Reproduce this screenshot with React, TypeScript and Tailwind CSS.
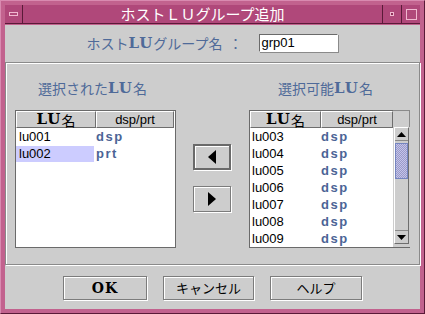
import React from 'react';

const jp = { fontFamily: '"Noto Sans CJK JP", "DejaVu Sans", sans-serif' };
const latin = { fontFamily: '"Liberation Sans", "DejaVu Sans", sans-serif' };
const serif = { fontFamily: '"DejaVu Serif", "Liberation Serif", serif' };

const available = ['lu003', 'lu004', 'lu005', 'lu006', 'lu007', 'lu008', 'lu009'];

function HeaderCell({ children, className = '' }: { children: React.ReactNode; className?: string }) {
  return (
    <div
      className={`h-[17px] flex items-center justify-center bg-[#cdcdcd] border-t border-l border-t-white border-l-white border-r border-b border-r-[#6e6e6e] border-b-[#6e6e6e] ${className}`}
    >
      {children}
    </div>
  );
}

function LuHead() {
  return (
    <span className="flex items-center text-[15px] leading-none text-black">
      <span style={serif} className="font-bold tracking-[1px]">LU</span>
      <span style={jp} className="text-[14px]">名</span>
    </span>
  );
}

function Row({ name, kind, selected }: { name: string; kind: string; selected?: boolean }) {
  return (
    <div className="flex h-[17px] items-center">
      <div
        style={latin}
        className={`w-[78px] h-[16px] flex items-center pl-[3px] text-[13px] text-black ${selected ? 'bg-[#ccccff]' : ''}`}
      >
        {name}
      </div>
      <div style={latin} className="pl-[2px] text-[13px] font-bold tracking-[1.5px] text-[#4b6496]">
        {kind}
      </div>
    </div>
  );
}

function Btn({ children, w, focus }: { children: React.ReactNode; w: string; focus?: boolean }) {
  return (
    <div
      className={`${w} flex items-center justify-center bg-[#cdcdcd] ${
        focus ? 'border-2 border-[#6a6a6a]' : 'border border-[#7c7c7c]'
      } shadow-[1px_1px_0_#ffffff,inset_1px_1px_0_#ffffff]`}
    >
      {children}
    </div>
  );
}

export default function App() {
  return (
    <div className="w-[425px] h-[314px] bg-[#c2628e] flex flex-col px-[4px] pt-[4px] pb-[4px] border border-[#5a1a38] border-t-[#d98ab0] border-l-[#d98ab0] overflow-hidden">
      {/* Title bar */}
      <div className="h-[19px] flex bg-[#b0487a] border-b border-[#5a1a38]">
        <div className="w-[18px] flex items-center justify-center border-r border-[#5a1a38]">
          <div className="w-[9px] h-[4px] border border-[#f0b8d0] bg-[#b0487a]" />
        </div>
        <div style={jp} className="flex-1 text-center text-white text-[15px] leading-[18px]">
          ホストＬＵグループ追加
        </div>
        <div className="w-[19px] flex items-center justify-center border-l border-[#5a1a38]">
          <div className="w-[4px] h-[4px] border border-[#f0b8d0] bg-[#8c2f58]" />
        </div>
        <div className="w-[19px] flex items-center justify-center border-l border-[#5a1a38]">
          <div className="w-[11px] h-[11px] border border-[#f0b8d0]" />
        </div>
      </div>

      {/* Content */}
      <div className="flex-1 mt-[1px] bg-[#cdcdcd] flex flex-col">
        <div className="mt-[9px] flex items-center justify-center gap-[17px]">
          <div style={jp} className="flex items-center text-[14px] text-[#4f6a99] leading-none">
            <span>ホスト</span>
            <span style={serif} className="font-bold text-[15px] tracking-[1px]">LU</span>
            <span>グループ名</span>
            <span className="ml-[6px]">：</span>
          </div>
          <div
            style={latin}
            className="w-[79px] h-[18px] bg-white border border-[#6a6a6a] border-r-white border-b-white shadow-[1px_1px_0_#8a8a8a] text-[13px] leading-[16px] pl-[1px] text-black"
          >
            grp01
          </div>
        </div>

        {/* Panel */}
        <div className="mt-[10px] h-[203px] border border-[#8a8a8a] shadow-[inset_1px_1px_0_#ffffff,1px_1px_0_#ffffff] flex pl-[9px] pt-[17px]">
          {/* Left list */}
          <div className="w-[161px] flex flex-col">
            <div style={jp} className="h-[16px] flex items-center justify-center text-[14px] text-[#4f6a99] leading-none pr-[6px]">
              <span>選択された</span>
              <span style={serif} className="font-bold text-[15px] tracking-[1px]">LU</span>
              <span>名</span>
            </div>
            <div className="mt-[14px] h-[138px] border border-[#6a6a6a] bg-white flex flex-col">
              <div className="flex">
                <HeaderCell className="w-[80px]">
                  <LuHead />
                </HeaderCell>
                <HeaderCell className="w-[78px]">
                  <span style={latin} className="text-[13px] text-black">dsp/prt</span>
                </HeaderCell>
              </div>
              <Row name="lu001" kind="dsp" />
              <Row name="lu002" kind="prt" selected />
            </div>
          </div>

          {/* Move buttons */}
          <div className="ml-[17px] w-[38px] flex flex-col pt-[64px] gap-[16px]">
            <Btn w="h-[26px]" focus>
              <svg width="10" height="14" viewBox="0 0 10 14">
                <polygon points="9,0 9,14 1,7" fill="#000" />
              </svg>
            </Btn>
            <Btn w="h-[26px]">
              <svg width="10" height="14" viewBox="0 0 10 14">
                <polygon points="1,0 1,14 9,7" fill="#000" />
              </svg>
            </Btn>
          </div>

          {/* Right list */}
          <div className="ml-[18px] w-[161px] flex flex-col">
            <div style={jp} className="h-[16px] flex items-center justify-center text-[14px] text-[#4f6a99] leading-none pr-[8px]">
              <span>選択可能</span>
              <span style={serif} className="font-bold text-[15px] tracking-[1px]">LU</span>
              <span>名</span>
            </div>
            <div className="mt-[14px] h-[138px] border border-[#6a6a6a] border-t-0 border-r-0 flex">
              <div className="w-[143px] flex flex-col bg-white border-t border-[#6a6a6a]">
                <div className="flex">
                  <HeaderCell className="w-[71px]">
                    <LuHead />
                  </HeaderCell>
                  <HeaderCell className="w-[72px]">
                    <span style={latin} className="text-[13px] text-black">dsp/prt</span>
                  </HeaderCell>
                </div>
                <div className="flex flex-col">
                  {available.map((n) => (
                    <div key={n} className="flex h-[17px] items-center">
                      <div style={latin} className="w-[71px] pl-[2px] text-[13px] text-black">{n}</div>
                      <div style={latin} className="text-[13px] font-bold tracking-[1.5px] text-[#4b6496]">dsp</div>
                    </div>
                  ))}
                </div>
              </div>
              {/* Scrollbar column */}
              <div className="w-[17px] flex flex-col bg-[#cdcdcd]">
                <div className="h-[17px] border-t border-r border-[#8a8a8a]" />
                <div className="flex-1 mx-[1px] mb-[3px] border border-[#6e6e6e] border-t-white border-l-white bg-[#cdcdcd] flex flex-col">
                  <div className="h-[13px] flex items-center justify-center border-b border-[#8a8a8a]">
                    <svg width="9" height="5" viewBox="0 0 9 5">
                      <polygon points="0,5 9,5 4.5,0" fill="#000" />
                    </svg>
                  </div>
                  <div className="mt-[2px] h-[36px] border border-[#7585c0] bg-[repeating-conic-gradient(#9a9ac8_0_25%,#c4c4ea_0_50%)] bg-[length:2px_2px]" />
                  <div className="flex-1" />
                  <div className="h-[13px] flex items-center justify-center border-t border-[#8a8a8a]">
                    <svg width="9" height="5" viewBox="0 0 9 5">
                      <polygon points="0,0 9,0 4.5,5" fill="#000" />
                    </svg>
                  </div>
                </div>
              </div>
            </div>
          </div>
        </div>

        {/* Bottom buttons */}
        <div className="mt-[11px] flex justify-center gap-[16px]">
          <Btn w="w-[84px] h-[24px]">
            <span style={serif} className="text-[14px] font-semibold tracking-[1px] text-black">OK</span>
          </Btn>
          <Btn w="w-[91px] h-[24px]">
            <span style={jp} className="text-[13px] text-black">キャンセル</span>
          </Btn>
          <Btn w="w-[92px] h-[24px]">
            <span style={jp} className="text-[13px] text-black">ヘルプ</span>
          </Btn>
        </div>
      </div>
    </div>
  );
}
